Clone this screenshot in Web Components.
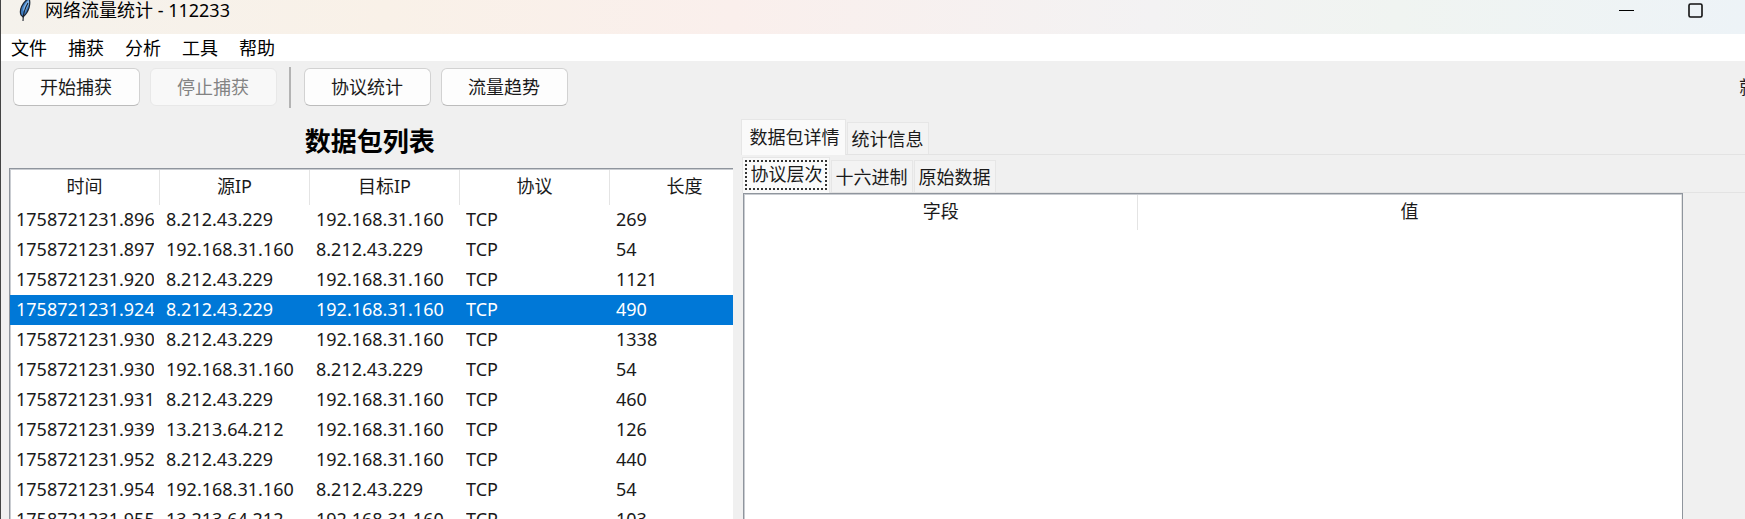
<!DOCTYPE html>
<html lang="zh-CN">
<head>
<meta charset="utf-8">
<title>网络流量统计 - 112233</title>
<style>
html, body { margin: 0; height: 100%; overflow: hidden; }
body { font: 18px/24px "Noto Sans", "Noto Sans CJK SC", sans-serif; color: #1a1a1a; background: #f0f0f0; }
</style>
</head>
<body>
<traffic-app></traffic-app>
<script>
const define = (name, html, setup) => customElements.define(name, class extends HTMLElement {
  constructor() {
    super();
    const template = document.createElement('template');
    template.innerHTML = html;
    this.attachShadow({ mode: 'open' }).append(template.content.cloneNode(true));
  }
  connectedCallback() { if (setup) setup(this, this.shadowRoot); }
});

define('title-bar', `
<style>
:host { display: flex; align-items: flex-start; height: 34px; box-sizing: border-box; padding-left: 15px; color: #000;
  background: linear-gradient(90deg, #f5f2ec 0%, #f9f1e8 22%, #faefec 42%, #f3f2f3 66%, #f0f4f1 80%, #edf3f7 100%); }
.icon { width: 20px; height: 22px; flex: none; }
.name { flex: 1; line-height: 20px; padding-left: 9px; }
button { border: 0; padding: 0; background: none; width: 69px; height: 20px; flex: none; }
button svg { display: block; margin: 0 auto; }
.max { margin-right: 15px; }
</style>
<svg class="icon" viewBox="0 0 20 22" aria-hidden="true">
  <path d="M5 15C3 10 6 3 13 -2C15 4 13 12 7 17Z" fill="#3f7cc0" stroke="#1c2634" stroke-width="1.2"/>
  <path d="M7 10C8 5 10 2 13 0L13 4L9 12Z" fill="#82b4e6"/>
  <path d="M12 3C9 8 7 13 7 21" fill="none" stroke="#1b222c" stroke-width="1.1"/>
</svg>
<span class="name"><slot></slot></span>
<button aria-label="最小化"><svg width="15" height="20"><path d="M0 10.5H15" stroke="#000"/></svg></button>
<button class="max" aria-label="最大化"><svg width="15" height="20"><rect x="1" y="4" width="13" height="13" rx="1.5" fill="none" stroke="#111" stroke-width="1.6"/></svg></button>`);

define('menu-bar', `
<style>
:host { display: flex; gap: 1px; background: #fff; height: 27px; }
::slotted(button) { font: inherit; line-height: 26px; color: #000; border: 0; background: none; padding: 0 10px; }
</style><slot></slot>`);

define('tool-button', `
<style>
:host { display: block; }
button { font: inherit; line-height: 34px; box-sizing: border-box; width: 127px; height: 38px; padding: 0 1px 0 0; color: #1a1a1a;
  background: #fdfdfd; border: 1px solid #d2d2d2; border-bottom-color: #bcbcbc; border-radius: 6px; }
button:disabled { color: #838383; background: #f8f8f8; border-color: #e8e8e8; }
</style><button><slot></slot></button>`,
(host, root) => { root.querySelector('button').disabled = host.hasAttribute('disabled'); });

define('tool-bar', `
<style>
:host { display: flex; align-items: center; gap: 10px; height: 52px; padding-left: 12px; overflow: hidden; }
.rule { width: 2px; height: 41px; background: #b3b3b3; margin: 0 3px 0 2px; }
.state { margin-left: auto; margin-right: -30px; flex: none; }
</style>
<tool-button>开始捕获</tool-button><tool-button disabled>停止捕获</tool-button>
<span class="rule"></span>
<tool-button>协议统计</tool-button><tool-button>流量趋势</tool-button>
<span class="state">就绪</span>`);

define('tree-table', `
<style>
:host { display: block; background: #fff; border: 1px solid #8f959d; box-shadow: inset 1px 1px #c9ccd1; padding: 1px 0 0; overflow: hidden; box-sizing: border-box; }
table { table-layout: fixed; border-collapse: separate; border-spacing: 0; width: 100%; }
table.fixed { width: 750px; }
th { font-weight: normal; height: 35px; line-height: 32px; padding: 0 0 3px; box-sizing: border-box; border-right: 1px solid #e4e4e4; text-align: center; }
td { height: 30px; padding: 0 6px; }
td span { display: block; overflow: hidden; white-space: nowrap; line-height: 28px; height: 30px; }
tr.on td { background: #0078d7; color: #fff; }
</style>
<table><colgroup></colgroup><thead><tr></tr></thead><tbody></tbody></table>`,
(host, root) => {
  const widths = (host.getAttribute('widths') || '').split(',');
  root.querySelector('table').classList.toggle('fixed', host.hasAttribute('fixed'));
  root.querySelector('colgroup').innerHTML = widths.map(w => '<col style="width:' + w + '">').join('');
  root.querySelector('thead tr').innerHTML = host.getAttribute('columns').split(',').map(c => '<th scope="col">' + c + '</th>').join('');
  const selected = Number(host.getAttribute('selected') || -1);
  root.querySelector('tbody').innerHTML = (host.rows || []).map((r, i) =>
    '<tr' + (i === selected ? ' class="on" aria-selected="true"' : '') + '>' + r.map(c => '<td><span>' + c + '</span></td>').join('') + '</tr>').join('');
});

define('packet-list', `
<style>
:host { display: flex; flex-direction: column; min-width: 0; min-height: 0; }
h2 { margin: 0; font-size: 26px; line-height: 32px; padding: 12px 3px 11px 0; text-align: center; color: #000; font-weight: bold; }
tree-table { flex: 1; min-height: 0; border-right: 0; border-bottom: 0; }
</style>
<h2>数据包列表</h2>
<tree-table fixed columns="时间,源IP,目标IP,协议,长度" widths="150px,150px,150px,150px,150px" selected="3"></tree-table>`,
(host, root) => {
  const a = '8.212.43.229', b = '192.168.31.160', c = '13.213.64.212';
  const data = [['896', a, b, 269], ['897', b, a, 54], ['920', a, b, 1121], ['924', a, b, 490], ['930', a, b, 1338],
    ['930', b, a, 54], ['931', a, b, 460], ['939', c, b, 126], ['952', a, b, 440], ['954', b, a, 54], ['955', c, b, 103]];
  const tree = root.querySelector('tree-table');
  tree.rows = data.map(([t, from, to, size]) => ['1758721231.' + t, from, to, 'TCP', size]);
  tree.connectedCallback();
});

define('tab-strip', `
<style>
:host { display: flex; flex-direction: column; min-height: 0; }
.tabs { display: flex; align-items: flex-end; gap: 1px; border-bottom: 1px solid #e3e3e3; }
::slotted(button) { font: inherit; color: #1a1a1a; background: #f3f3f3; border: 1px solid #e6e6e6; border-bottom: 0;
  box-sizing: border-box; height: 32px; line-height: 30px; padding: 1px 5px 0 3px; }
::slotted(button[aria-selected="true"]) { background: #fafafa; height: 36px; line-height: 32px; margin-bottom: -1px; padding: 0 6px 2px 7px; }
::slotted(button.focus) { padding: 0 7px 4px; outline: 2px dotted #333; outline-offset: -5px; }
.body { flex: 1; min-height: 0; display: flex; flex-direction: column; }
</style>
<div class="tabs" role="tablist"><slot name="tab"></slot></div>
<div class="body"><slot></slot></div>`);

define('packet-detail', `
<style>
:host { display: flex; min-width: 0; min-height: 0; }
tab-strip { flex: 1; min-width: 0; }
.inner { padding: 2px 0 0 1px; }
tree-table { flex: 1; min-height: 0; margin: 0 62px 0 1px; border-bottom: 0; }
</style>
<tab-strip>
  <button slot="tab" role="tab" aria-selected="true">数据包详情</button>
  <button slot="tab" role="tab">统计信息</button>
  <tab-strip class="inner">
    <button slot="tab" role="tab" aria-selected="true" class="focus">协议层次</button>
    <button slot="tab" role="tab">十六进制</button>
    <button slot="tab" role="tab">原始数据</button>
    <tree-table columns="字段,值" widths="42%,58%"></tree-table>
  </tab-strip>
</tab-strip>`);

define('traffic-app', `
<style>
:host { display: flex; flex-direction: column; height: 100vh; box-sizing: border-box; border-left: 1px solid #444; overflow: hidden; background: #f0f0f0; }
title-bar, menu-bar, tool-bar { flex: none; }
main { flex: 1; min-height: 0; display: grid; grid-template: minmax(0, 1fr) / minmax(0, 42fr) minmax(0, 58fr); }
packet-list { padding-left: 8px; }
packet-detail { padding: 6px 0 0 8px; }
</style>
<title-bar>网络流量统计 - 112233</title-bar>
<menu-bar><button>文件</button><button>捕获</button><button>分析</button><button>工具</button><button>帮助</button></menu-bar>
<tool-bar></tool-bar>
<main><packet-list></packet-list><packet-detail></packet-detail></main>`);
</script>
</body>
</html>
